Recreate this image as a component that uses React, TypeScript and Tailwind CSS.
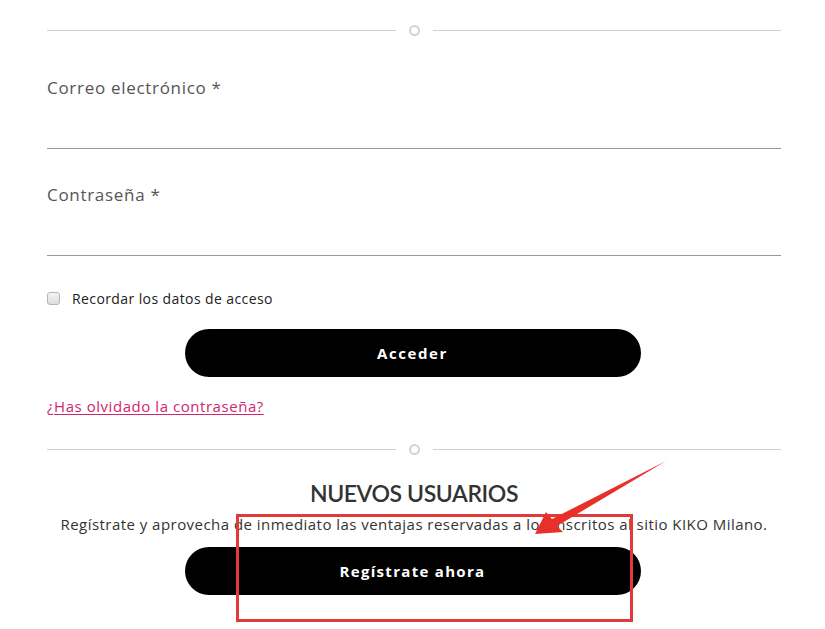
import React from "react";

function Divider({ className = "" }: { className?: string }) {
  return (
    <div className={"flex items-center h-[10px] " + className}>
      <div className="flex-1 h-px bg-[#d0d0d0]" />
      <div className="mx-[13px] w-[11px] h-[11px] rounded-full border-2 border-[#d3d3d3]" />
      <div className="flex-1 h-px bg-[#d0d0d0]" />
    </div>
  );
}

export default function App() {
  return (
    <div className="relative w-[825px] h-[629px] bg-white overflow-hidden font-['Open_Sans',sans-serif]">
      <div className="pl-[47px] pr-[44px] pt-[25px]">
        <Divider />

        <div className="mt-[41px] text-[17px] leading-[24px] text-[#555] tracking-[0.7px]">Correo electrónico *</div>
        <div className="h-[49px] border-b border-[#9a9a9a]" />

        <div className="mt-[34px] text-[17px] leading-[24px] text-[#555] tracking-[0.7px]">Contraseña *</div>
        <div className="h-[49px] border-b border-[#9a9a9a]" />

        <label className="mt-[32px] flex items-center h-[20px]">
          <span className="w-[13px] h-[13px] rounded-[3px] border border-[#b5b5b5] bg-gradient-to-b from-[#f4f4f4] to-[#dcdcdc]" />
          <span className="ml-[12px] text-[14px] text-[#222] tracking-[0.4px]">Recordar los datos de acceso</span>
        </label>

        <div className="mt-[21px] flex justify-center pr-[3px]">
          <button className="w-[456px] h-[48px] rounded-full bg-black text-white text-[15px] font-bold tracking-[1.6px]">
            Acceder
          </button>
        </div>

        <div className="mt-[19px] h-[20px] leading-[20px]">
          <a className="text-[15px] text-[#d2266f] underline underline-offset-2 tracking-[0.55px]">¿Has olvidado la contraseña?</a>
        </div>

        <Divider className="mt-[28px]" />

        <h2 className="mt-[25px] text-center text-[23px] leading-[28px] font-semibold text-[#333] tracking-[-0.4px] font-['Lato',sans-serif]">
          NUEVOS USUARIOS
        </h2>
        <p className="mt-[7px] text-center text-[15px] leading-[20px] text-[#333] tracking-[0.46px]">
          Regístrate y aprovecha de inmediato las ventajas reservadas a los inscritos al sitio KIKO Milano.
        </p>

        <div className="mt-[13px] flex justify-center pr-[3px]">
          <button className="w-[456px] h-[48px] rounded-full bg-black text-white text-[15px] font-bold tracking-[1.3px]">
            Regístrate ahora
          </button>
        </div>
      </div>

      {/* annotation box */}
      <div className="absolute left-[236px] top-[514px] w-[397px] h-[108px] border-[3px] border-[#e23a3a]" />
      {/* annotation arrow */}
      <svg className="absolute left-0 top-0 pointer-events-none" width="825" height="629">
        <polygon
          points="535,534 546,512 552,519 666,461 557,526 563,532"
          fill="#e8302a"
        />
      </svg>
    </div>
  );
}
